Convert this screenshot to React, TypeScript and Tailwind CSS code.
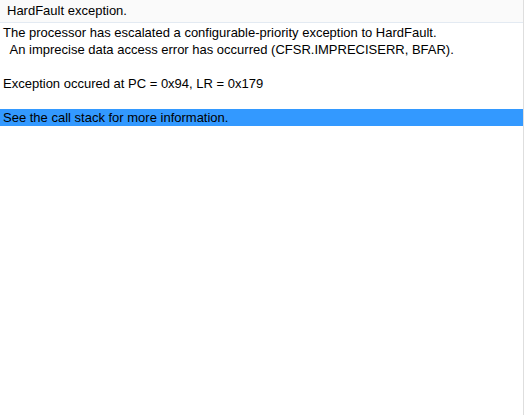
export default function App() {
  const lines = [
    "The processor has escalated a configurable-priority exception to HardFault.",
    "  An imprecise data access error has occurred (CFSR.IMPRECISERR, BFAR).",
    "",
    "Exception occured at PC = 0x94, LR = 0x179",
    "",
  ];
  return (
    <div className="h-[415px] w-[526px] bg-white font-['Liberation_Sans',Arial,sans-serif] text-[13px] text-black">
      <div className="flex h-full w-[524px] flex-col border-r border-[#dedede]">
        {/* Title */}
        <div className="h-[23px] border-b border-[#e3eaf2] bg-[#fafafa] pl-[7px] leading-[22px]">HardFault exception.</div>
        {/* Message */}
        <div className="pt-[1px]">
          {lines.map((l, i) => (
            <div key={i} className="h-[17px] whitespace-pre pl-[3px] leading-[17px]">
              {l}
            </div>
          ))}
          <div className="h-[17px] bg-[#3399ff] pl-[3px] leading-[17px]">See the call stack for more information.</div>
        </div>
      </div>
    </div>
  );
}
